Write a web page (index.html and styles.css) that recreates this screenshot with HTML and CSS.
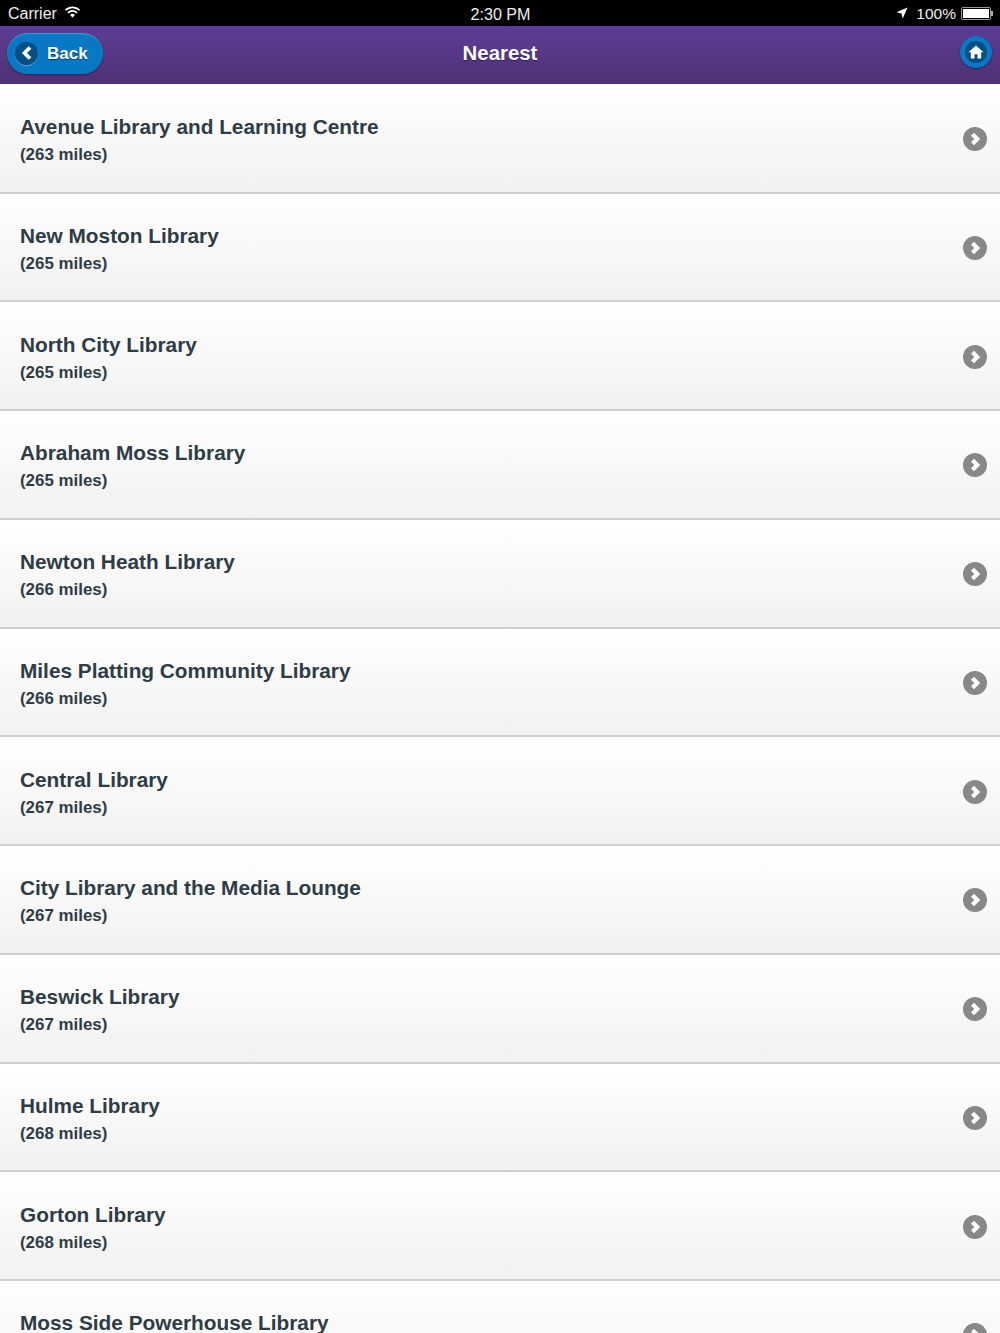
FILE: index.html
```html
<!DOCTYPE html>
<html lang="en">
<head>
    <meta charset="UTF-8">
    <meta name="viewport" content="width=device-width, initial-scale=1.0">
    <title>Nearest</title>
    <link rel="stylesheet" href="styles.css">
</head>
<body>
    <div class="status-bar">
        <div class="status-left">
            <span>Carrier</span>
            <svg class="wifi" width="17" height="12" viewBox="0 0 16 12">
                <path d="M1 4.200a10 10 0 0 1 14 0" fill="none" stroke="#fff" stroke-width="1.700"/>
                <path d="M3.500 6.800a6.400 6.400 0 0 1 9 0" fill="none" stroke="#fff" stroke-width="1.700"/>
                <path d="M8 11.500 5.600 9a3.400 3.400 0 0 1 4.800 0z" fill="#fff"/>
            </svg>
        </div>
        <div class="status-time">2:30 PM</div>
        <div class="status-right">
            <svg class="arrow" width="12" height="12" viewBox="0 0 12 12">
                <path d="M11.500.5 .5 5.200l5 1.200 1.200 5z" fill="#fff"/>
            </svg>
            <span class="percent">100%</span>
            <div class="battery"><div class="battery-fill"></div></div>
            <div class="battery-tip"></div>
        </div>
    </div>

    <div class="nav-bar">
        <a class="back-btn">
            <span class="back-circle">
                <svg width="14" height="16" viewBox="0 0 14 16">
                    <path d="M10 2.500 4.500 8l5.500 5.500" fill="none" stroke="#fff" stroke-width="3.800"/>
                </svg>
            </span>
            <span class="back-label">Back</span>
        </a>
        <h1>Nearest</h1>
        <a class="home-btn">
            <svg width="16" height="14" viewBox="0 0 16 14">
                <path d="M8 .5 .5 7.200h2.300V13.500h3.700V9.200h3v4.300h3.700V7.200h2.300z" fill="#fff"/>
            </svg>
        </a>
    </div>

    <ul class="list">
        <li class="row">
            <div class="info"><div class="name">Avenue Library and Learning Centre</div><div class="miles">(263 miles)</div></div>
            <span class="chevron"><svg width="16" height="16" viewBox="0 0 16 16"><path d="M5.500 3.200 10.300 8 5.500 12.800" fill="none" stroke="#fff" stroke-width="4.200"/></svg></span>
        </li>
        <li class="row">
            <div class="info"><div class="name">New Moston Library</div><div class="miles">(265 miles)</div></div>
            <span class="chevron"><svg width="16" height="16" viewBox="0 0 16 16"><path d="M5.500 3.200 10.300 8 5.500 12.800" fill="none" stroke="#fff" stroke-width="4.200"/></svg></span>
        </li>
        <li class="row">
            <div class="info"><div class="name">North City Library</div><div class="miles">(265 miles)</div></div>
            <span class="chevron"><svg width="16" height="16" viewBox="0 0 16 16"><path d="M5.500 3.200 10.300 8 5.500 12.800" fill="none" stroke="#fff" stroke-width="4.200"/></svg></span>
        </li>
        <li class="row">
            <div class="info"><div class="name">Abraham Moss Library</div><div class="miles">(265 miles)</div></div>
            <span class="chevron"><svg width="16" height="16" viewBox="0 0 16 16"><path d="M5.500 3.200 10.300 8 5.500 12.800" fill="none" stroke="#fff" stroke-width="4.200"/></svg></span>
        </li>
        <li class="row">
            <div class="info"><div class="name">Newton Heath Library</div><div class="miles">(266 miles)</div></div>
            <span class="chevron"><svg width="16" height="16" viewBox="0 0 16 16"><path d="M5.500 3.200 10.300 8 5.500 12.800" fill="none" stroke="#fff" stroke-width="4.200"/></svg></span>
        </li>
        <li class="row">
            <div class="info"><div class="name">Miles Platting Community Library</div><div class="miles">(266 miles)</div></div>
            <span class="chevron"><svg width="16" height="16" viewBox="0 0 16 16"><path d="M5.500 3.200 10.300 8 5.500 12.800" fill="none" stroke="#fff" stroke-width="4.200"/></svg></span>
        </li>
        <li class="row">
            <div class="info"><div class="name">Central Library</div><div class="miles">(267 miles)</div></div>
            <span class="chevron"><svg width="16" height="16" viewBox="0 0 16 16"><path d="M5.500 3.200 10.300 8 5.500 12.800" fill="none" stroke="#fff" stroke-width="4.200"/></svg></span>
        </li>
        <li class="row">
            <div class="info"><div class="name">City Library and the Media Lounge</div><div class="miles">(267 miles)</div></div>
            <span class="chevron"><svg width="16" height="16" viewBox="0 0 16 16"><path d="M5.500 3.200 10.300 8 5.500 12.800" fill="none" stroke="#fff" stroke-width="4.200"/></svg></span>
        </li>
        <li class="row">
            <div class="info"><div class="name">Beswick Library</div><div class="miles">(267 miles)</div></div>
            <span class="chevron"><svg width="16" height="16" viewBox="0 0 16 16"><path d="M5.500 3.200 10.300 8 5.500 12.800" fill="none" stroke="#fff" stroke-width="4.200"/></svg></span>
        </li>
        <li class="row">
            <div class="info"><div class="name">Hulme Library</div><div class="miles">(268 miles)</div></div>
            <span class="chevron"><svg width="16" height="16" viewBox="0 0 16 16"><path d="M5.500 3.200 10.300 8 5.500 12.800" fill="none" stroke="#fff" stroke-width="4.200"/></svg></span>
        </li>
        <li class="row">
            <div class="info"><div class="name">Gorton Library</div><div class="miles">(268 miles)</div></div>
            <span class="chevron"><svg width="16" height="16" viewBox="0 0 16 16"><path d="M5.500 3.200 10.300 8 5.500 12.800" fill="none" stroke="#fff" stroke-width="4.200"/></svg></span>
        </li>
        <li class="row">
            <div class="info"><div class="name">Moss Side Powerhouse Library</div></div>
            <span class="chevron"><svg width="16" height="16" viewBox="0 0 16 16"><path d="M5.500 3.200 10.300 8 5.500 12.800" fill="none" stroke="#fff" stroke-width="4.200"/></svg></span>
        </li>
    </ul>
</body>
</html>
```

FILE: styles.css
```css
html, body {
    height: 1333px;
    overflow: hidden;
}
body {
    font-family: "Liberation Sans", Arial, sans-serif;
    margin: 0;
    padding: 0;
    background-color: #fff;
}
.status-bar {
    height: 26px;
    background-color: #000;
    color: #eee;
    font-size: 16px;
    display: grid;
    grid-template-columns: 1fr auto 1fr;
    align-items: center;
    padding: 2px 7px 0 8px;
    box-sizing: border-box;
}
.status-left {
    display: flex;
    align-items: center;
    gap: 7px;
}
.wifi {
    margin-top: -4px;
}
.status-time {
    font-size: 16.100px;
}
.status-right {
    display: flex;
    align-items: center;
    justify-content: flex-end;
}
.arrow {
    margin-right: 8px;
    margin-top: -2px;
}
.percent {
    font-size: 15.500px;
}
.battery {
    width: 30px;
    height: 13px;
    box-sizing: border-box;
    border: 1px solid #999;
    border-radius: 2px;
    padding: 1px;
    margin-left: 5px;
    margin-top: -2px;
}
.battery-fill {
    height: 100%;
    background-color: #fff;
}
.battery-tip {
    width: 2px;
    height: 5px;
    margin-top: -2px;
    background-color: #aaa;
}
.nav-bar {
    height: 58px;
    background: linear-gradient(to bottom, #5c3d96, #4f3173);
    display: flex;
    align-items: center;
    justify-content: space-between;
    position: relative;
    padding: 0 7px;
}
.nav-bar h1 {
    position: absolute;
    left: 0;
    right: 0;
    margin: 0 0 3px;
    text-align: center;
    color: #fff;
    font-size: 20.400px;
    font-weight: bold;
    text-shadow: 0 1px 1px rgba(0, 0, 0, 0.4);
}
.back-btn {
    width: 96px;
    height: 41px;
    margin-top: -4px;
    border-radius: 21px;
    background-color: #0678c4;
    box-shadow: inset 0 1px 1px rgba(255, 255, 255, 0.25), 0 1px 2px rgba(0, 0, 0, 0.35);
    display: flex;
    align-items: center;
    gap: 9px;
    padding-left: 8px;
    box-sizing: border-box;
}
.back-circle {
    width: 23px;
    height: 23px;
    border-radius: 50%;
    background-color: #064e83;
    box-shadow: 0 1px 1px rgba(255, 255, 255, 0.3);
    display: flex;
    align-items: center;
    justify-content: center;
}
.back-label {
    color: #fff;
    font-size: 17px;
    font-weight: bold;
    padding-top: 2px;
    text-shadow: 0 1px 1px rgba(0, 0, 0, 0.5);
}
.home-btn {
    width: 22px;
    height: 22px;
    margin-top: -6px;
    margin-right: 1px;
    border: 5px solid #0678c4;
    border-radius: 50%;
    background-color: #064e83;
    box-shadow: 0 1px 2px rgba(0, 0, 0, 0.35);
    display: flex;
    align-items: center;
    justify-content: center;
}
.list {
    list-style: none;
    margin: 0;
    padding: 0.750px 0 0;
}
.row {
    height: 108.750px;
    box-sizing: border-box;
    padding: 2px 13px 0 20px;
    background: linear-gradient(to bottom, #fff, #f1f1f1);
    border-bottom: 2px solid #cfcfcf;
    display: flex;
    align-items: center;
    justify-content: space-between;
}
.info {
    margin-top: 3px;
    min-height: 55px;
}
.name {
    color: #2e3c46;
    font-size: 20.800px;
    font-weight: bold;
    line-height: 28px;
}
.miles {
    color: #2e3c46;
    font-size: 16.900px;
    font-weight: bold;
    line-height: 26px;
    padding-top: 1px;
}
.chevron {
    width: 24px;
    height: 24px;
    border-radius: 50%;
    background-color: #888;
    display: flex;
    align-items: center;
    justify-content: center;
}
```
